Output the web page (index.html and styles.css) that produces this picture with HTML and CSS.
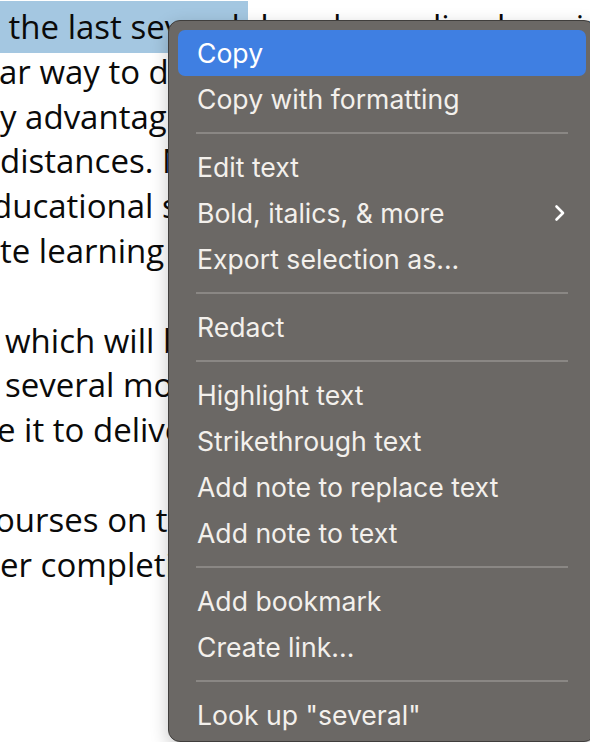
FILE: index.html
```html
<!DOCTYPE html>
<html lang="en">
<head>
<meta charset="utf-8">
<title>Context menu</title>
<link rel="stylesheet" href="styles.css">
</head>
<body>
<div class="doc">
  <p class="line l1"><span class="sel">&nbsp;the last several </span>decades, online learning has become the</p>
  <p class="line l2">ar way to deliver education to students who are</p>
  <p class="line l3">y advantages for students who live at</p>
  <p class="line l4">distances. Many schools now offer these</p>
  <p class="line l5">ducational services to all of their students</p>
  <p class="line l6">te learning at home or at work.</p>
  <p class="line blank">&nbsp;</p>
  <p class="line l7">which will be covered in the next</p>
  <p class="line l8">several modules of this course, and</p>
  <p class="line l9">e it to deliver lessons to students.</p>
  <p class="line blank">&nbsp;</p>
  <p class="line l10">ourses on the platform will be available</p>
  <p class="line l11">er completion of the registration.</p>
</div>

<div class="menu" role="menu">
  <div class="item active">Copy</div>
  <div class="item">Copy with formatting</div>
  <div class="sep"></div>
  <div class="item">Edit text</div>
  <div class="item sub">Bold, italics, &amp; more
    <svg class="chev" width="12" height="18" viewBox="0 0 12 18"><path d="M2.5 2.5 L9 9 L2.5 15.5" fill="none" stroke="#ffffff" stroke-width="2.6" stroke-linecap="round" stroke-linejoin="round"/></svg>
  </div>
  <div class="item">Export selection as...</div>
  <div class="sep"></div>
  <div class="item">Redact</div>
  <div class="sep"></div>
  <div class="item">Highlight text</div>
  <div class="item">Strikethrough text</div>
  <div class="item">Add note to replace text</div>
  <div class="item">Add note to text</div>
  <div class="sep"></div>
  <div class="item">Add bookmark</div>
  <div class="item">Create link...</div>
  <div class="sep"></div>
  <div class="item">Look up "several"</div>
</div>
</body>
</html>
```

FILE: styles.css
```css
html, body {
  margin: 0;
  padding: 0;
  background: #ffffff;
  width: 590px;
  height: 742px;
  overflow: hidden;
}

.doc {
  padding-top: 5px;
  font-family: "Open Sans", "Noto Sans", sans-serif;
  font-size: 33px;
  color: #0a0a0a;
}

.line {
  margin: 0;
  height: 44.8px;
  line-height: 44.8px;
  white-space: nowrap;
}

.sel {
  background: #a4c7e1;
  padding: 3px 0 4px;
}

.l2 { text-indent: -1px; }
.l5 { text-indent: -8px; }
.l7 { text-indent: 5px; }
.l8 { text-indent: 5px; }
.l9 { text-indent: -3px; }
.l10 { text-indent: -5px; }

.menu {
  position: absolute;
  left: 168px;
  top: 20px;
  width: 408px;
  height: 711px;
  padding: 8.5px 9px 0;
  background: #6b6865;
  border: 1.5px solid #403e3c;
  border-radius: 12px;
  box-shadow: 0 6px 18px rgba(0, 0, 0, 0.22);
  font-family: "Inter", "Noto Sans", sans-serif;
  font-size: 26.6px;
  color: #f3f0ec;
  display: flex;
  flex-direction: column;
}

.item {
  height: 46px;
  padding: 0 20px 0 19px;
  display: flex;
  align-items: center;
  justify-content: space-between;
  border-radius: 7px;
  flex-shrink: 0;
}

.item.active {
  background: #3f7fe2;
  color: #ffffff;
}

.chev {
  display: block;
}

.sep {
  height: 22px;
  flex-shrink: 0;
  display: flex;
  align-items: center;
  padding: 0 18px;
}

.sep::before {
  content: "";
  display: block;
  width: 100%;
  height: 2px;
  background: #8a8784;
}
```
